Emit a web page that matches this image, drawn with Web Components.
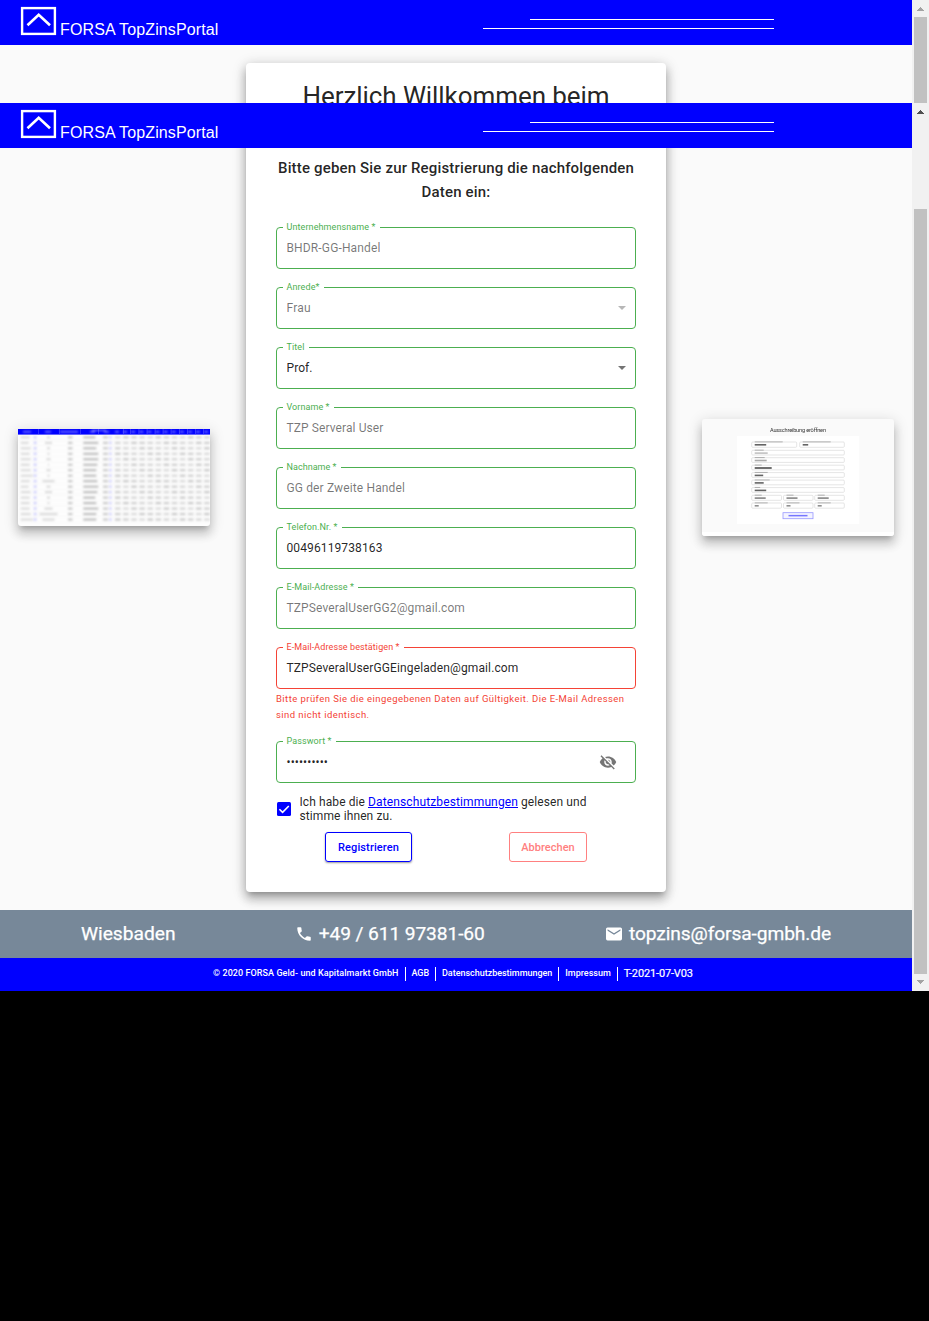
<!DOCTYPE html>
<html lang="de"><head><meta charset="utf-8"><title>FORSA TopZinsPortal</title>
<style>
html,body{margin:0;background:#000}
body{font-family:Roboto,"Liberation Sans",sans-serif;width:929px;height:1321px;overflow:hidden}
</style></head><body>
<portal-app></portal-app>
<script>
function define(name, html, setup){
  const t=document.createElement('template'); t.innerHTML=html;
  customElements.define(name,class extends HTMLElement{
    connectedCallback(){
      if(this.shadowRoot)return;
      this.attachShadow({mode:'open'}).append(t.content.cloneNode(true));
      if(setup)setup(this,this.shadowRoot);
    }
  });
}

/* One line of text tracked out to the width given in "w". */
define('fit-text',`<style>:host{display:inline-block;white-space:nowrap}span{display:inline-block}:host([underline]) span{text-decoration:underline}</style><span><slot></slot></span>`,(el,r)=>{
  const s=r.querySelector('span'),w=+el.getAttribute('w');
  const n=s.getBoundingClientRect().width;
  el.style.letterSpacing=((w-n)/el.textContent.length)+'px';
  el.style.width=w+'px';
});

define('brand-bar',`<style>
:host{display:flex;flex:none;justify-content:space-between;height:45px;background:#00f;color:#fff;position:relative;z-index:2;box-sizing:border-box;padding:0 138px 0 20px}
.brand{display:flex;gap:3px;font:16px/20px "Liberation Sans",sans-serif}
svg{display:block;margin-top:6px}
fit-text{margin-top:20px}
.lines{display:flex;flex-direction:column;align-items:flex-end;gap:8px;padding-top:19px}
i{display:block;height:1px;background:#fff;width:244px}i+i{width:291px}
</style><div class="brand"><svg width="37" height="30" fill="none" stroke="#fff"><rect x="2.1" y="2.1" width="32.8" height="25.8" stroke-width="2.4"/><path d="M7.5 19.2 18.7 8.7 30 19.2" stroke-width="2.6"/></svg><fit-text w="158.500">FORSA TopZinsPortal</fit-text></div>
<div class="lines"><i></i><i></i></div>`);

define('scroll-rail',`<style>
:host{display:flex;flex-direction:column;width:17px;background:#f1f1f1;height:100%}
svg{display:block;flex:none}.up{fill:#505050}
:host([top]) .up{fill:#a3a3a3}
.thumb{background:#c1c1c1;width:13px;margin:89px 2px 0;height:765px;flex:none}
:host([top]) .thumb{margin-top:0;height:86px}
:host([top]) .down{display:none}
</style><svg class="up" width="17" height="17"><path d="M5 11V10H6V9H7V8H8V7H9V8H10V9H11V10H12V11Z"/></svg><div class="thumb"></div><svg class="down" width="17" height="17" fill="#a3a3a3"><path d="M5 6V7H6V8H7V9H8V10H9V9H10V8H11V7H12V6Z"/></svg>`);

define('app-card',`<style>
:host{display:block;box-sizing:border-box;width:420px;background:#fff;border-radius:4px;padding:0 30px;color:rgba(0,0,0,.87);box-shadow:0 5px 5px -3px rgba(0,0,0,.2),0 8px 10px 1px rgba(0,0,0,.14),0 3px 14px 2px rgba(0,0,0,.12),0 3px 12px rgba(0,0,0,.12)}
</style><slot></slot>`);

define('outline-field',`<style>
:host{display:flex;align-items:center;justify-content:space-between;box-sizing:border-box;position:relative;height:42px;margin-bottom:18px;border:1px solid #4caf50;border-radius:4px;padding:0 9px 1px 9.5px;color:rgba(0,0,0,.87);font-size:12px;line-height:18px;--c:#4caf50}
:host([disabled]){color:rgba(0,0,0,.54)}
:host([error]){border-color:#f44336;--c:#f44336}
label{position:absolute;left:6px;top:-7px;background:#fff;padding:0 4px 0 3.5px;font-size:9px;line-height:12px;color:var(--c);white-space:nowrap}
svg{display:none}
:host([select]) .arrow{display:block;fill:#000;opacity:.54}
:host([select][disabled]) .arrow{opacity:.28}
:host([password]) .eye{display:block;margin-right:9px}
</style><label></label><span class="v"><slot></slot></span>
<svg class="arrow" width="8" height="4"><path d="M0 0H8L4 4Z"/></svg>
<svg class="eye" width="18" height="18" viewBox="0 0 24 24" fill="#757575"><path d="M12 7c2.76 0 5 2.24 5 5 0 .65-.13 1.26-.36 1.83l2.92 2.92c1.51-1.26 2.7-2.89 3.43-4.75-1.73-4.39-6-7.5-11-7.5-1.4 0-2.74.25-3.98.7l2.16 2.16C10.74 7.13 11.35 7 12 7zM2 4.27l2.28 2.28.46.46C3.08 8.3 1.78 10.02 1 12c1.73 4.39 6 7.5 11 7.5 1.55 0 3.03-.3 4.38-.84l.42.42L19.73 22 21 20.73 3.27 3 2 4.27zM7.53 9.8l1.55 1.55c-.05.21-.08.43-.08.65 0 1.66 1.34 3 3 3 .22 0 .44-.03.65-.08l1.55 1.55c-.67.33-1.41.53-2.2.53-2.76 0-5-2.24-5-5 0-.79.2-1.53.53-2.2zm4.31-.78 3.15 3.15.02-.16c0-1.66-1.34-3-3-3l-.17.01z"/></svg>`,(el,r)=>{
  const f=document.createElement('fit-text');f.setAttribute('w',el.getAttribute('lw'));f.textContent=el.getAttribute('label');r.querySelector('label').append(f);
});

define('outline-button',`<style>
:host{display:flex;align-items:center;justify-content:center;box-sizing:border-box;height:30px;border:1px solid #00f;border-radius:3px;color:#00f;font-size:11px;font-weight:500;box-shadow:0 1px 2px rgba(0,0,0,.4)}
:host([muted]){color:#ff8080;border-color:#ff8080;box-shadow:none}
</style><slot></slot>`);

const shadow='box-shadow:0 5px 5px -3px rgba(0,0,0,.2),0 8px 10px 1px rgba(0,0,0,.14),0 3px 14px 2px rgba(0,0,0,.12);';

/* Miniature of the rates table. */
define('table-preview',`<style>:host{display:block;width:192px;height:97px;background:#fdfdfd;border-radius:0 0 3px 3px;overflow:hidden;${shadow}}svg{display:block}.soft{filter:blur(.8px)}</style><svg width="192" height="97"><g id="head"></g></svg>`,(el,r)=>{
  let s='<rect width="192" height="5.6" fill="#00f"/>';
  for(const x of [20.5,41,62.5,80.5,105,112.5,120.7,128.8,136.8,144.8,152.8,161,169,177,185])s+=`<rect x="${x}" width=".5" height="5.6" fill="#5b5bff"/>`;
  s+='<g class="soft">';
  const bar=(x,y,w,c,o,h=1.7)=>{s+=`<rect x="${x}" y="${y}" width="${w}" height="${h}" fill="${c}" opacity="${o}"/>`};
  for(const [x,w] of [[5,8],[27,6],[42,18],[72,5],[86,5]])bar(x,2.2,w,'#fff',.6,1.2);
  bar(74,.9,14,'#fff',.6,1);
  for(let i=0;i<12;i++)bar(97+i*8.1,2.2,4,'#fff',.6,1.2);
  const a=[9,8,10,9,10,9,10,12,9,8,10,9,9,9,10,12],b=[3,7,3,2,4,1,4,2,12,4,7,3,2,8,18,12],c=[12,15,13,15,15,14,13,13,14,15,14,12,13,15,13,13];
  for(let k=0;k<16;k++){const y=7.5+k*5.48;
    s+=`<rect y="${y+3.4}" width="192" height=".4" fill="#ddd" opacity=".4"/>`;
    bar(2.7,y,a[k],'#666',.27);bar(15.7,y-.4,2.8,'#66f',.32,2.4);bar(30.5-b[k]/2,y,b[k],'#555',.25);bar(50,y,4.5,'#333',.32);
    bar(65.3,y,c[k],'#222',.35);bar(85,y,5,'#333',.3);bar(91.2,y-.4,2.4,'#66f',.32,2.4);
    for(let i=0;i<12;i++)bar(97+i*8.1,y,5.6,'#333',.22+((i*3+k)%4)*.035);
  }
  r.getElementById('head').innerHTML=s+'</g>';
});

/* Miniature of the tender form. */
define('form-preview',`<style>:host{display:block;width:192px;height:117px;background:#fafafa;border-radius:3px;overflow:hidden;${shadow}}svg{display:block}text{font:5.6px Roboto,sans-serif}.soft{filter:blur(.55px)}.title{filter:blur(.3px)}</style><svg width="192" height="117"><rect y="113" width="192" height="4" fill="#fff"/><rect x="35" y="17" width="122.3" height="88" fill="#fff"/><text class="title" x="68" y="12.7" textLength="56" fill="#333">Ausschreibung eröffnen</text><g id="fields" class="soft"></g></svg>`,(el,r)=>{
  let s='';
  const f=(x,w,y,h,lw,vw,o=.7)=>{s+=`<rect x="${x}" y="${y}" width="${w}" height="${h}" rx="1" fill="none" stroke="#d4d4d4" stroke-width=".6"/><rect x="${x+3}" y="${y-.7}" width="${lw}" height="1.1" fill="#777" opacity=".48"/><rect x="${x+3}" y="${y+2}" width="${vw}" height="1.6" fill="#222" opacity="${o}"/>`};
  f(49.7,45,23,5.3,28,11.5);f(97.7,44.6,23,5.3,28,5.5);
  [[31.3,9,13,.28],[38.7,10,12,.38],[46.2,7,17,.8],[53.6,13,8.5],[61.1,15,9],[68.6,5.5,11.5]].forEach(v=>f(49.7,92.6,v[0],4.7,v[1],v[2],v[3]));
  [[49.7,29.8],[81.5,29.5],[112.7,29.6]].forEach(v=>{f(v[0],v[1],76.3,5,7,11,.55);f(v[0],v[1],84,5.2,13,4,.5)});
  s+='<rect x="81" y="93.7" width="30" height="6" fill="#f4f4ff" stroke="#9797ff" stroke-width=".8"/><rect x="86.5" y="95.9" width="19" height="1.5" fill="#33f" opacity=".65"/>';
  r.getElementById('fields').innerHTML=s;
});

define('consent-row',`<style>
:host{display:flex;align-items:center;gap:8.500px;font-size:12px;line-height:14px;padding-left:1px;height:28px}
svg{flex:none;margin-top:-1px}span{display:block}a{color:#00f}
</style><svg width="14" height="14"><rect width="14" height="14" rx="1.5" fill="#00f"/><path d="M2.4 7.2 5.6 10.4 11.8 4" fill="none" stroke="#fff" stroke-width="1.6"/></svg><div><span><fit-text w="65.500">Ich habe die</fit-text><fit-text w="3"></fit-text><a href="#"><fit-text underline w="150">Datenschutzbestimmungen</fit-text></a><fit-text w="3"></fit-text><fit-text w="65.500">gelesen und</fit-text></span><span><fit-text w="93">stimme ihnen zu.</fit-text></span></div>`);

define('contact-bar',`<style>
:host{display:flex;justify-content:space-between;align-items:center;height:48px;box-sizing:border-box;background:#789;color:#fff;padding:0 81px 1px;font-size:19.2px;line-height:24px;-webkit-text-stroke:.25px #fff}
div{display:flex;align-items:center;gap:7px}svg{fill:#fff;display:block}
.p{gap:6px;margin-left:-2px}
</style><fit-text w="94.500">Wiesbaden</fit-text>
<div class="p"><svg width="18" height="18" viewBox="0 0 24 24"><path d="M6.62 10.79c1.44 2.83 3.76 5.14 6.59 6.59l2.2-2.2c.27-.27.67-.36 1.02-.24 1.12.37 2.33.57 3.57.57.55 0 1 .45 1 1V20c0 .55-.45 1-1 1-9.39 0-17-7.61-17-17 0-.55.45-1 1-1h3.5c.55 0 1 .45 1 1 0 1.25.2 2.45.57 3.57.11.35.03.74-.25 1.02l-2.2 2.2z"/></svg><fit-text w="166">+49 / 611 97381-60</fit-text></div>
<div class="m"><svg width="16" height="16" viewBox="2 2 20 20"><path d="M20 4H4c-1.100 0-1.990.9-1.990 2L2 18c0 1.100.9 2 2 2h16c1.100 0 2-.9 2-2V6c0-1.100-.9-2-2-2zm0 4l-8 5-8-5V6l8 5 8-5v2z"/></svg><fit-text w="202">topzins@forsa-gmbh.de</fit-text></div>`);

define('legal-bar',`<style>
:host{display:flex;height:33px;box-sizing:border-box;background:#00f;color:#fff;padding:9px 0 0 213px;font-size:9px;font-weight:500;line-height:12px}
fit-text{padding-right:6px;margin-right:6px;height:14px;border-right:1px solid #fff}
fit-text:last-child{border:0;font-size:11px;font-weight:400;-webkit-text-stroke:.2px #fff;margin-top:1px}
</style><fit-text w="185.500">© 2020 FORSA Geld- und Kapitalmarkt GmbH</fit-text><fit-text w="17.500">AGB</fit-text><fit-text w="110.300">Datenschutzbestimmungen</fit-text><fit-text w="45.500">Impressum</fit-text><fit-text w="69">T-2021-07-V03</fit-text>`);

define('portal-app',`<style>
:host{display:block;background:#000;height:1321px}
.frame{display:grid;grid-template-columns:912px 17px;overflow:hidden;background:#fafafa}
.one{height:103px}.two{height:888px}
.page{display:flex;flex-direction:column;min-width:0;height:100%;overflow:hidden}
.top{display:flex;justify-content:center;padding-top:18px;flex:none}
.top app-card{height:200px}
h1{margin:17px 0 0;font-size:26px;line-height:32px;font-weight:400;text-align:center}
main{display:grid;grid-template-columns:192px 420px 192px;justify-content:space-between;padding:0 18px;height:762px;flex:none;overflow:hidden;box-sizing:border-box}
main app-card{margin-top:-20px;height:764px;padding-top:28px}
table-preview{margin-top:281px}form-preview{margin-top:271px}
h2{margin:0 0 23px;font-size:15px;line-height:24px;font-weight:500;text-align:center}
.err{color:#f44336;font-size:9.500px;line-height:16px;margin:-16px 0 18px}
.err fit-text{display:block}
.btns{display:flex;justify-content:space-between;padding:0 49px;margin-top:9px}
consent-row{margin-top:-6px}
</style>
<section class="frame one"><div class="page"><brand-bar></brand-bar><div class="top"><app-card><h1><fit-text w="307">Herzlich Willkommen beim</fit-text></h1></app-card></div></div><scroll-rail top></scroll-rail></section>
<section class="frame two"><div class="page"><brand-bar></brand-bar>
<main><table-preview></table-preview>
<app-card>
<h2><fit-text w="356">Bitte geben Sie zur Registrierung die nachfolgenden</fit-text><br><fit-text w="69">Daten ein:</fit-text></h2>
<outline-field disabled label="Unternehmensname *" lw="89"><fit-text w="94">BHDR-GG-Handel</fit-text></outline-field>
<outline-field disabled select label="Anrede*" lw="33"><fit-text w="24.500">Frau</fit-text></outline-field>
<outline-field select label="Titel" lw="18"><fit-text w="26">Prof.</fit-text></outline-field>
<outline-field disabled label="Vorname *" lw="43"><fit-text w="97">TZP Serveral User</fit-text></outline-field>
<outline-field disabled label="Nachname *" lw="50"><fit-text w="118.500">GG der Zweite Handel</fit-text></outline-field>
<outline-field label="Telefon.Nr. *" lw="51"><fit-text w="96">00496119738163</fit-text></outline-field>
<outline-field disabled label="E-Mail-Adresse *" lw="67.500"><fit-text w="178.500">TZPSeveralUserGG2@gmail.com</fit-text></outline-field>
<outline-field error label="E-Mail-Adresse bestätigen *" lw="113"><fit-text w="232">TZPSeveralUserGGEingeladen@gmail.com</fit-text></outline-field>
<div class="err"><fit-text w="348.500">Bitte prüfen Sie die eingegebenen Daten auf Gültigkeit. Die E-Mail Adressen</fit-text><fit-text w="93.500">sind nicht identisch.</fit-text></div>
<outline-field password label="Passwort *" lw="45"><fit-text w="41.500">••••••••••</fit-text></outline-field>
<consent-row></consent-row>
<div class="btns"><outline-button style="width:87px"><fit-text w="61">Registrieren</fit-text></outline-button><outline-button muted style="width:78px"><fit-text w="53.500">Abbrechen</fit-text></outline-button></div>
</app-card>
<form-preview></form-preview></main>
<contact-bar></contact-bar><legal-bar></legal-bar></div><scroll-rail></scroll-rail></section>`);
</script></body></html>
